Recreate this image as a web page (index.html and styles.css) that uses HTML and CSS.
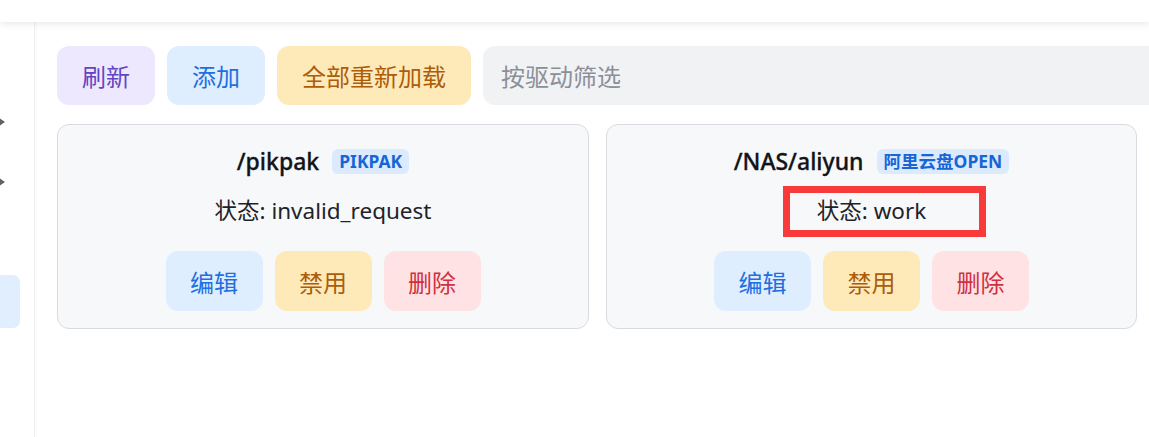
FILE: index.html
```html
<!DOCTYPE html>
<html lang="zh-CN">
<head>
<meta charset="utf-8">
<title>存储</title>
<link rel="stylesheet" href="styles.css">
</head>
<body>
<header class="topbar"></header>
<div class="layout">
  <aside class="sidebar">
    <span class="arrow arrow-first"></span>
    <span class="arrow arrow-second"></span>
    <span class="side-active"></span>
  </aside>
  <main class="main">
    <div class="toolbar">
      <button class="btn btn-purple">刷新</button>
      <button class="btn btn-blue">添加</button>
      <button class="btn btn-amber">全部重新加载</button>
      <input class="filter" type="text" placeholder="按驱动筛选">
    </div>
    <div class="cards">
      <section class="card">
        <div class="card-title">
          <span class="mount">/pikpak</span>
          <span class="badge">PIKPAK</span>
        </div>
        <div class="status">状态: invalid_request</div>
        <div class="actions">
          <button class="btn btn-blue act">编辑</button>
          <button class="btn btn-amber act">禁用</button>
          <button class="btn btn-red act">删除</button>
        </div>
      </section>
      <section class="card">
        <div class="card-title">
          <span class="mount">/NAS/aliyun</span>
          <span class="badge">阿里云盘OPEN</span>
        </div>
        <div class="status">状态: work</div>
        <div class="actions">
          <button class="btn btn-blue act">编辑</button>
          <button class="btn btn-amber act">禁用</button>
          <button class="btn btn-red act">删除</button>
        </div>
        <span class="highlight"></span>
      </section>
    </div>
  </main>
</div>
</body>
</html>
```
FILE: styles.css
```css
* { box-sizing: border-box; }

html, body {
  margin: 0;
  padding: 0;
  background: #ffffff;
  overflow: hidden;
  width: 1149px;
  height: 437px;
}

body {
  font-family: "Noto Sans", "Noto Sans CJK SC", sans-serif;
  color: #1f2329;
}

.topbar {
  height: 22px;
  background: #ffffff;
  box-shadow: 0 2px 7px rgba(0, 0, 0, 0.09);
  position: relative;
  z-index: 2;
}

.layout {
  display: flex;
  height: 415px;
}

.sidebar {
  width: 35px;
  flex-shrink: 0;
  border-right: 1px solid #efefef;
  box-shadow: 1px 0 3px rgba(0, 0, 0, 0.03);
  overflow: hidden;
  display: flex;
  flex-direction: column;
  padding-top: 95px;
}

.arrow {
  display: block;
  width: 0;
  height: 0;
  border-top: 5px solid transparent;
  border-bottom: 5px solid transparent;
  border-left: 7px solid #5f6368;
  margin-left: -2px;
}

.arrow-second {
  margin-top: 50px;
}

.side-active {
  display: block;
  width: 20px;
  height: 53px;
  margin-top: 88px;
  background: #e0eefe;
  border-radius: 0 7px 7px 0;
}

.main {
  flex: 1;
  padding: 24px 12px 0 22px;
  min-width: 0;
}

.toolbar {
  display: flex;
  gap: 12px;
  height: 59px;
}

.btn {
  border: none;
  font-family: "Noto Sans CJK SC", "Noto Sans", sans-serif;
  font-size: 24px;
  height: 59px;
  padding: 0;
  border-radius: 12px;
  cursor: pointer;
  flex-shrink: 0;
}

.btn-purple { background: #ede8fe; color: #6344c4; }
.btn-blue { background: #dfeeff; color: #1f6fe0; }
.btn-amber { background: #feeab9; color: #ad5d09; }
.btn-red { background: #fee2e4; color: #d1303f; }

.toolbar .btn { width: 98px; }
.toolbar .btn-amber { width: 194px; }

.filter {
  flex-shrink: 0;
  width: 720px;
  height: 59px;
  border: none;
  border-radius: 12px;
  background: #f1f2f4;
  padding: 0 18px;
  font-family: "Noto Sans CJK SC", "Noto Sans", sans-serif;
  font-size: 24px;
  color: #333;
}

.filter::placeholder { color: #8b9098; }

.cards {
  display: grid;
  grid-template-columns: 532px 531px;
  gap: 17px;
  margin-top: 19px;
}

.card {
  position: relative;
  height: 205px;
  background: #f7f8fa;
  border: 1px solid #d8dbe0;
  border-radius: 12px;
  padding: 23px 16px 0;
  display: flex;
  flex-direction: column;
  align-items: center;
}

.card-title {
  display: flex;
  align-items: center;
  gap: 13px;
  height: 26px;
}

.mount {
  font-size: 23px;
  font-weight: 500;
  color: #111418;
  letter-spacing: 0;
  -webkit-text-stroke: 0.3px #111418;
}

.badge {
  display: inline-block;
  height: 25px;
  line-height: 25px;
  padding: 0 7px;
  border-radius: 6px;
  background: #dceafe;
  color: #1666d6;
  font-size: 17.5px;
  font-weight: 700;
  font-family: "Noto Sans", "Noto Sans CJK SC", sans-serif;
}

.status {
  margin-top: 22px;
  font-size: 22.5px;
  line-height: 30px;
  color: #1f2329;
}

.actions {
  display: flex;
  gap: 12px;
  margin-top: 25px;
}

.act {
  width: 97px;
  height: 60px;
  padding: 0;
}

.highlight {
  position: absolute;
  left: 176px;
  top: 61px;
  width: 203px;
  height: 51px;
  border: 7px solid #f93a3a;
  pointer-events: none;
}
```
